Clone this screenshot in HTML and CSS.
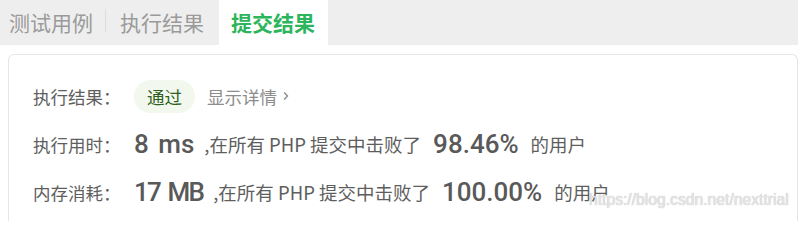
FILE: index.html
```html
<!DOCTYPE html>
<html lang="zh-CN">
<head>
<meta charset="utf-8">
<link rel="stylesheet" href="styles.css">
</head>
<body>
<div class="page">
  <div class="tabs">
    <div class="tab tab-first">测试用例</div>
    <div class="tab">执行结果</div>
    <div class="tab tab-active">提交结果</div>
  </div>
  <div class="card">
    <div class="row">
      <div class="label">执行结果：</div>
      <span class="pill">通过</span>
      <span class="detail">显示详情<svg class="chev" width="6" height="10" viewBox="0 0 6 10"><path d="M1.2 1.5 L4.5 5 L1.2 8.5" fill="none" stroke="#8c8c8c" stroke-width="1.4"/></svg></span>
    </div>
    <div class="row">
      <div class="label">执行用时：</div>
      <span class="big">8 ms</span>
      <span class="small">,在所有 PHP 提交中击败了</span>
      <span class="big pct">98.46%</span>
      <span class="small">的用户</span>
    </div>
    <div class="row">
      <div class="label">内存消耗：</div>
      <span class="big tight">17 MB</span>
      <span class="small">,在所有 PHP 提交中击败了</span>
      <span class="big pct">100.00%</span>
      <span class="small">的用户</span>
    </div>
  </div>
  <div class="watermark">https://blog.csdn.net/nexttrial</div>
</div>
</body>
</html>
```
FILE: styles.css
```css
* { box-sizing: border-box; }
html, body { margin: 0; padding: 0; background: #fff; }
body {
  font-family: "Noto Sans CJK SC", "Noto Sans", sans-serif;
  width: 798px;
  height: 221px;
  overflow: hidden;
}
.page { position: relative; height: 221px; }
.tabs {
  display: flex;
  height: 45px;
  background: #eeeeee;
}
.tab {
  position: relative;
  display: flex;
  align-items: center;
  padding: 0 14px 0 13px;
  font-size: 21px;
  color: #9a9a9a;
  line-height: 1;
}
.tab-first { padding-left: 9px; padding-right: 13px; }
.tab-first::after {
  content: "";
  position: absolute;
  right: 0;
  top: 9px;
  width: 1px;
  height: 23px;
  background: #dddddd;
}
.tab-first + .tab { padding-left: 14px; padding-right: 15px; }
.tab-active {
  background: #fff;
  color: #2db55d;
  font-weight: 700;
  padding: 0 13px 0 12px;
}
.card {
  margin: 9px 0 0 8px;
  border: 1px solid #e6e6e6;
  border-bottom: 0;
  border-radius: 6px 6px 0 0;
  padding: 17px 24px 0;
  height: 167px;
}
.row {
  display: flex;
  align-items: center;
  height: 48px;
  white-space: nowrap;
}
.label {
  width: 101px;
  font-size: 17.5px;
  color: #5e5e5e;
}
.pill {
  display: inline-flex;
  align-items: center;
  justify-content: center;
  width: 61px;
  height: 33px;
  border-radius: 17px;
  background: #f2f8ee;
  color: #2f5f20;
  font-size: 17.5px;
}
.detail {
  display: inline-flex;
  align-items: center;
  margin-left: 12px;
  font-size: 17.5px;
  color: #8c8c8c;
}
.chev { margin-left: 6px; }
.big {
  font-family: Roboto, "Noto Sans", sans-serif;
  font-weight: 500;
  font-size: 26px;
  word-spacing: 3px;
  color: #595959;
}
.tight { word-spacing: 3px; letter-spacing: -1.8px; }
.small {
  font-size: 18.5px;
  color: #5e5e5e;
  margin-left: 10px;
}
.pct { margin-left: 12px; }
.pct + .small { margin-left: 12px; }
.watermark {
  position: absolute;
  left: 589px;
  top: 191px;
  font-family: "Liberation Sans", Arial, sans-serif;
  font-size: 15.7px;
  color: #e6e6e6;
  text-shadow: 0 0 1px #b0b0b0;
}
```
